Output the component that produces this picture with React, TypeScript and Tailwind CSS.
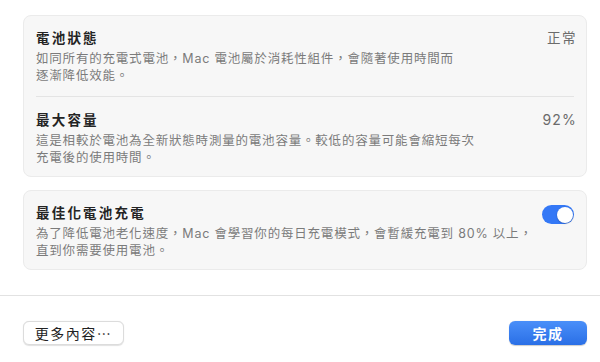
const font = { fontFamily: 'Inter, "Noto Sans CJK TC", sans-serif' };

function Row({
  title,
  lines,
  right,
  className,
}: {
  title: string;
  lines: string[];
  right: React.ReactNode;
  className?: string;
}) {
  return (
    <div className={`flex items-start justify-between ${className ?? ""}`}>
      <div className="flex flex-col">
        <div className="text-[13.5px] leading-[18px] font-bold tracking-[2.2px] text-[#242424]">{title}</div>
        <div className="mt-[3px] text-[12.5px] leading-[17px] tracking-[0.8px] text-[#7b7b7b] whitespace-nowrap">
          {lines.map((l) => (
            <div key={l}>{l}</div>
          ))}
        </div>
      </div>
      {right}
    </div>
  );
}

export default function App() {
  return (
    <div className="w-[600px] h-[362px] bg-white flex flex-col overflow-hidden" style={font}>
      <div className="pl-[23px] pr-[13px] pt-[15px] flex flex-col gap-[13px]">
        {/* battery info card */}
        <div className="rounded-[8px] border border-[#ebebeb] bg-[#f7f7f7] px-[12px]">
          <Row
            className="pt-[13px] pb-[12px] border-b border-[#e4e4e4]"
            title="電池狀態"
            lines={["如同所有的充電式電池，Mac 電池屬於消耗性組件，會隨著使用時間而", "逐漸降低效能。"]}
            right={<span className="-mr-[3px] text-[13.5px] leading-[18px] tracking-[1.5px] text-[#6b6b6b]">正常</span>}
          />
          <Row
            className="pt-[14px] pb-[10px]"
            title="最大容量"
            lines={["這是相較於電池為全新狀態時測量的電池容量。較低的容量可能會縮短每次", "充電後的使用時間。"]}
            right={<span className="-mr-[3px] text-[14px] leading-[18px] tracking-[1.2px] text-[#6b6b6b]">92%</span>}
          />
        </div>

        {/* optimized charging card */}
        <div className="rounded-[8px] border border-[#ebebeb] bg-[#f7f7f7] px-[12px] pt-[13px] pb-[10px]">
          <Row
            title="最佳化電池充電"
            lines={["為了降低電池老化速度，Mac 會學習你的每日充電模式，會暫緩充電到 80% 以上，", "直到你需要使用電池。"]}
            right={
              <div className="mt-[1px] w-[32px] h-[19px] rounded-full bg-[#3478f6] p-[1.5px] flex justify-end">
                <div className="w-[16px] h-[16px] rounded-full bg-white shadow-[0_0.5px_1.5px_rgba(0,0,0,0.3)]" />
              </div>
            }
          />
        </div>
      </div>

      <div className="mt-[25px] h-px bg-[#e2e2e2]" />

      <div className="pl-[23px] pr-[13px] pt-[25px] flex justify-between">
        <button className="h-[24px] w-[101px] rounded-[6px] bg-white border border-[#dcdcdc] shadow-[0_0.5px_1px_rgba(0,0,0,0.12)] text-[14px] tracking-[1.5px] text-[#222] flex items-center justify-center">
          更多內容⋯
        </button>
        <button className="h-[24px] w-[78px] rounded-[6px] bg-gradient-to-b from-[#4a8ff9] to-[#2a6fe6] text-[14px] font-semibold tracking-[1.5px] text-white flex items-center justify-center shadow-[0_0.5px_1px_rgba(0,0,0,0.2)]">
          完成
        </button>
      </div>
    </div>
  );
}
